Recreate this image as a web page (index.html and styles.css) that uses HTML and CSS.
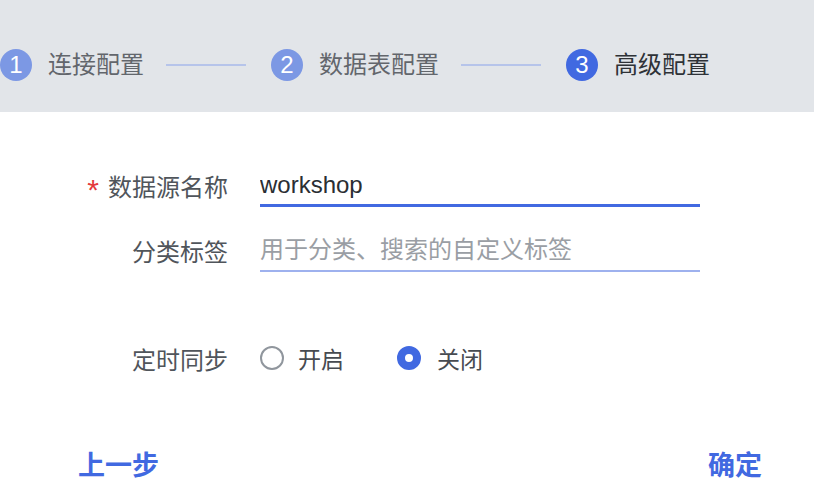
FILE: index.html
```html
<!DOCTYPE html>
<html lang="zh">
<head>
<meta charset="utf-8">
<title>高级配置</title>
<link rel="stylesheet" href="styles.css">
</head>
<body>
<div class="steps">
  <div class="step done"><span class="num">1</span><span class="step-text">连接配置</span></div>
  <span class="step-line"></span>
  <div class="step done"><span class="num">2</span><span class="step-text">数据表配置</span></div>
  <span class="step-line"></span>
  <div class="step active"><span class="num">3</span><span class="step-text">高级配置</span></div>
</div>
<form class="form">
  <div class="row row-name">
    <label class="label"><span class="req">*</span>数据源名称</label>
    <input class="input input-focus" type="text" value="workshop">
  </div>
  <div class="row row-tag">
    <label class="label">分类标签</label>
    <input class="input input-tag" type="text" placeholder="用于分类、搜索的自定义标签">
  </div>
  <div class="row row-sync">
    <span class="label">定时同步</span>
    <div class="radios">
      <span class="radio"><span class="dot"></span>开启</span>
      <span class="radio checked"><span class="dot"></span>关闭</span>
    </div>
  </div>
</form>
<div class="footer">
  <span class="btn">上一步</span>
  <span class="btn">确定</span>
</div>
</body>
</html>
```

FILE: styles.css
```css
* { box-sizing: border-box; }
html, body { margin: 0; padding: 0; background: #ffffff; }
body {
  width: 814px;
  height: 498px;
  overflow: hidden;
  font-family: "Liberation Sans", "Noto Sans CJK SC", sans-serif;
}
.steps {
  height: 112px;
  background: #e2e5e9;
  display: flex;
  align-items: center;
  padding-top: 17px;
}
.step { display: flex; align-items: center; }
.num {
  flex-shrink: 0;
  width: 32px;
  height: 32px;
  border-radius: 50%;
  background: #7c98e4;
  color: #ffffff;
  font-size: 24px;
  line-height: 32px;
  text-align: center;
  margin-right: 16px;
}
.step.active .num { background: #4169e1; }
.step-text {
  font-size: 24px;
  line-height: 32px;
  color: #62666c;
}
.step.active .step-text { color: #2e3237; }
.step-line {
  flex-shrink: 0;
  width: 80px;
  height: 2px;
  background: #b6c4ea;
  margin: 0 25px 0 22px;
}
.form { padding-top: 51px; }
.row { display: flex; align-items: center; }
.label {
  flex-shrink: 0;
  width: 228px;
  margin-right: 32px;
  text-align: right;
  font-size: 24px;
  color: #50555b;
}
.req {
  color: #e4393c;
  margin-right: 9px;
  font-size: 30px;
  line-height: 24px;
  vertical-align: -4px;
}
.input {
  width: 440px;
  height: 44px;
  border: none;
  outline: none;
  background: transparent;
  padding: 3px 0 0 0;
  margin: 0;
  font-family: "Liberation Sans", "Noto Sans CJK SC", sans-serif;
  font-size: 24px;
  color: #2a2e33;
}
.input-focus { border-bottom: 3px solid #4169e1; }
.row-tag { margin-top: 21px; }
.input-tag { border-bottom: 2px solid #9eb1ee; padding-top: 2px; }
.input-tag::placeholder { color: #9a9ea4; opacity: 1; }
.row-sync { margin-top: 64px; height: 44px; }
.radios { display: flex; align-items: center; }
.radio {
  display: flex;
  align-items: center;
  font-size: 23px;
  color: #474b51;
  margin-right: 53px;
}
.dot {
  flex-shrink: 0;
  width: 24px;
  height: 24px;
  border-radius: 50%;
  border: 2px solid #90969d;
  margin-right: 14px;
  margin-left: 0;
}
.radio.checked .dot {
  border: 8px solid #4169e1;
  background: #ffffff;
  margin-right: 16px;
}
.footer {
  display: flex;
  justify-content: space-between;
  align-items: center;
  padding: 0 52px 0 78px;
  margin-top: 68px;
}
.btn {
  font-size: 27px;
  font-weight: bold;
  color: #4169e1;
  line-height: 36px;
}
```
